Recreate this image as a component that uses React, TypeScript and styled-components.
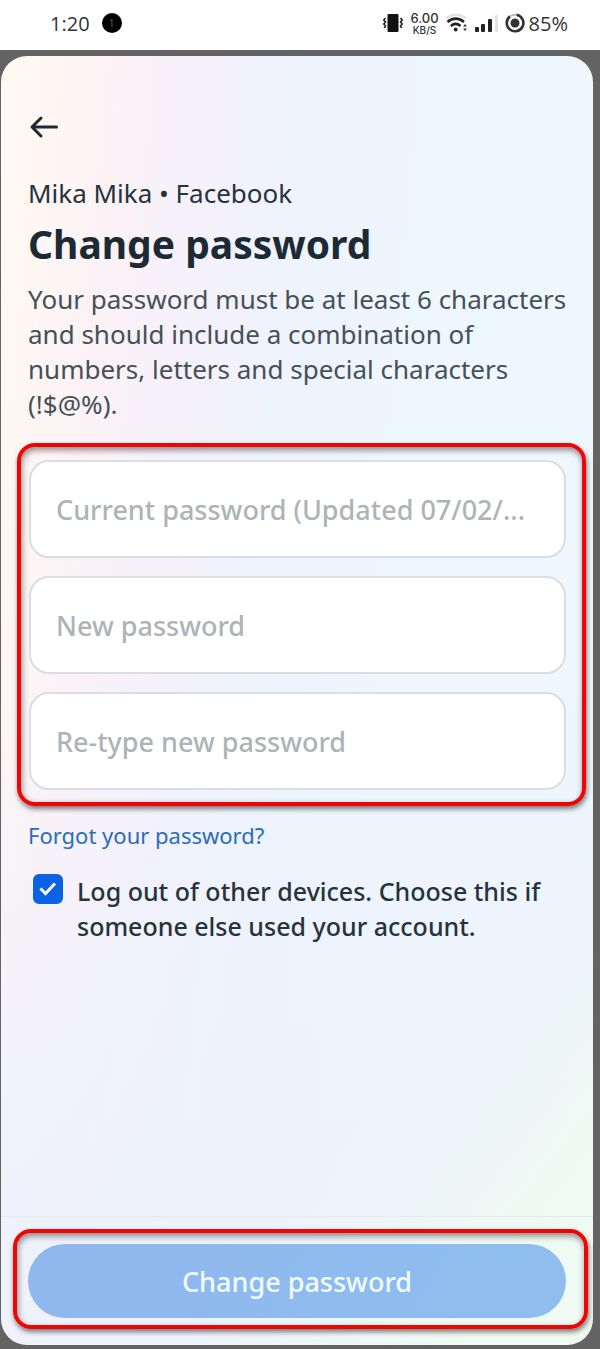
import React, { useState } from "react";
import styled, { createGlobalStyle } from "styled-components";

const GlobalStyle = createGlobalStyle`
  *, *::before, *::after { box-sizing: border-box; }
  body {
    margin: 0;
    background: #636363;
    font-family: "Noto Sans", "Open Sans", sans-serif;
    color: #26333b;
  }
`;

const Page = styled.div`
  min-height: 100vh;
  display: flex;
  flex-direction: column;
`;

const StatusBar = styled.header`
  height: 50px;
  padding: 0 32px 4px 50px;
  display: flex;
  align-items: center;
  justify-content: space-between;
  background: #fff;
  color: #333;
  font-family: "Open Sans", sans-serif;
  font-size: 20px;
`;

const StatusGroup = styled.div<{ $gap: number }>`
  display: flex;
  align-items: center;
  gap: ${(p) => p.$gap}px;
`;

const Dot = styled.span`
  width: 20px;
  height: 20px;
  border-radius: 50%;
  background: #000;
  color: #666;
  font-size: 10px;
  line-height: 20px;
  text-align: center;
`;

const Speed = styled.span`
  display: flex;
  flex-direction: column;
  align-items: center;
  font-family: Inter, sans-serif;
  font-weight: 500;
`;

const SpeedValue = styled.span`
  font-size: 13px;
  line-height: 13px;
`;

const SpeedUnit = styled.span`
  font-size: 10px;
  line-height: 10px;
`;

const Sheet = styled.main`
  flex: 1;
  display: flex;
  flex-direction: column;
  margin: 6px 7px 4px 1px;
  border-radius: 26px;
  background:
    linear-gradient(128deg, rgba(239, 250, 242, 0) 74%, #effaf2 92%),
    linear-gradient(180deg, rgba(236, 242, 252, 0) 45%, rgba(236, 242, 252, 0.8) 90%),
    linear-gradient(95deg, #fff9f2 2%, #fcf2f6 16%, #f5f1fb 30%, #eef3fc 44%, #eef6fe 62%);
`;

const Intro = styled.section`
  padding: 56px 20px 0 27px;
`;

const BackButton = styled.button`
  display: block;
  width: 32px;
  height: 32px;
  margin: 0;
  padding: 0;
  border: 0;
  background: none;
  color: #1c2b33;
`;

const Account = styled.p`
  margin: 32px 0 0;
  font-size: 26px;
  line-height: 34px;
`;

const Title = styled.h1`
  margin: 8px 0 0;
  font-size: 39px;
  line-height: 52px;
  font-weight: 700;
  color: #1c2b33;
`;

const Description = styled.p`
  margin: 12px 0 0;
  font-size: 26px;
  line-height: 35px;
  color: #465057;
`;

const Highlight = styled.div`
  border: 4px solid #f00505;
  border-radius: 18px;
  box-shadow: 1px 3px 5px rgba(0, 0, 0, 0.5), inset 1px 3px 6px rgba(0, 0, 0, 0.45);
`;

const FieldsHighlight = styled(Highlight)`
  display: flex;
  flex-direction: column;
  gap: 18px;
  margin: 21px 7px 0 16px;
  padding: 13px 16px 12px 8px;
`;

const Field = styled.input`
  width: 100%;
  height: 98px;
  padding: 0 25px;
  border: 2px solid #d9dee3;
  border-radius: 20px;
  background: #fff;
  font: inherit;
  font-size: 27px;
  font-weight: 500;
  color: #1c2b33;
  text-overflow: ellipsis;
  &::placeholder { color: #adb4b7; opacity: 1; }
`;

const Options = styled.section`
  padding: 12px 27px 0;
`;

const ForgotLink = styled.a`
  display: inline-block;
  font-size: 22px;
  line-height: 34px;
  color: #2a6db8;
  text-decoration: none;
`;

const LogoutRow = styled.label`
  display: flex;
  align-items: flex-start;
  gap: 14px;
  margin-top: 22px;
  padding-left: 5px;
  font-size: 25px;
  line-height: 35px;
  font-weight: 500;
`;

const TickBox = styled.span`
  position: relative;
  flex: none;
  width: 30px;
  height: 30px;
  svg {
    position: absolute;
    inset: 0;
    pointer-events: none;
  }
`;

const TickInput = styled.input`
  appearance: none;
  display: block;
  width: 30px;
  height: 30px;
  margin: 0;
  border: 2px solid #0b62e4;
  border-radius: 6px;
  background: #fff;
  &:checked { background: #0b62e4; }
`;

const Footer = styled.footer`
  margin-top: auto;
  padding: 12px 5px 16px 12px;
  border-top: 1px solid #e6e9f3;
`;

const SubmitHighlight = styled(Highlight)`
  padding: 11px 18px 7px 11px;
`;

const SubmitButton = styled.button`
  display: block;
  width: 100%;
  height: 74px;
  border: 0;
  border-radius: 37px;
  background: linear-gradient(120deg, #8fb7ee, #8fbeee);
  color: #f0fbff;
  font: inherit;
  font-size: 27px;
  font-weight: 500;
`;

const VibrateIcon = () => (
  <svg width="22" height="20" viewBox="0 0 22 20" aria-hidden="true">
    <rect x="5.500" y="1" width="11" height="18" rx="1" fill="#111" />
    <path d="M3.5 5 1.8 7l1.7 2-1.7 2 1.7 2-1.2 2M18.5 5l1.700 2-1.700 2 1.700 2-1.700 2 1.200 2" fill="none" stroke="#222" strokeWidth="1.6" />
  </svg>
);

const WifiIcon = () => (
  <svg width="24" height="20" viewBox="0 0 24 20" aria-hidden="true">
    <g fill="none" strokeWidth="2.6">
      <path d="M1 5.5C7 .5 15 .5 21 5.5" stroke="#dedede" strokeWidth="2" />
      <path d="M2.5 9C7.500 4.500 14 4.500 19 9" stroke="#222" />
      <path d="M5.800 13C9 10.300 12.500 10.300 15.500 13" stroke="#222" />
    </g>
    <circle cx="10.700" cy="16.500" r="1.900" fill="#222" />
    <path d="m18 13.500 2-2.500 2 2.500zM18 15.500h4l-2 2.500z" fill="#333" />
  </svg>
);

const SignalIcon = () => (
  <svg width="24" height="20" viewBox="0 0 24 20" aria-hidden="true">
    <g fill="#222">
      <rect x="0" y="14" width="4" height="5" rx="1" />
      <rect x="6" y="11" width="4" height="8" rx="1" />
      <rect x="13" y="6" width="4" height="13" rx="1" />
    </g>
    <rect x="20" y="2" width="3" height="17" rx="1" fill="#e2e2e2" />
  </svg>
);

const BatteryIcon = () => (
  <svg width="20" height="20" viewBox="0 0 20 20" aria-hidden="true">
    <circle cx="10" cy="10" r="4.500" fill="#333" />
    <path d="M11.500 1.800A8.300 8.300 0 1 1 5 3.400" fill="none" stroke="#333" strokeWidth="2.600" />
    <path d="M5.500 3.100A8.300 8.300 0 0 1 11 1.700" fill="none" stroke="#bbb" strokeWidth="2" />
  </svg>
);

const fields = [
  { id: "current", placeholder: "Current password (Updated 07/02/..." },
  { id: "new", placeholder: "New password" },
  { id: "retype", placeholder: "Re-type new password" },
];

export default function App() {
  const [logout, setLogout] = useState(true);

  return (
    <Page>
      <GlobalStyle />
      <StatusBar>
        <StatusGroup $gap={12}>
          <span>1:20</span>
          <Dot>1</Dot>
        </StatusGroup>
        <StatusGroup $gap={6}>
          <VibrateIcon />
          <Speed>
            <SpeedValue>6.00</SpeedValue>
            <SpeedUnit>KB/S</SpeedUnit>
          </Speed>
          <WifiIcon />
          <SignalIcon />
          <StatusGroup $gap={4}>
            <BatteryIcon />
            <span>85%</span>
          </StatusGroup>
        </StatusGroup>
      </StatusBar>
      <Sheet>
        <Intro>
          <BackButton type="button" aria-label="Back">
            <svg width="32" height="32" viewBox="0 0 32 32" fill="none" stroke="currentColor" strokeWidth="3" strokeLinecap="round" strokeLinejoin="round">
              <path d="M28.500 15H4.500M13 6 4 15l9 9" />
            </svg>
          </BackButton>
          <Account>Mika Mika • Facebook</Account>
          <Title>Change password</Title>
          <Description>
            Your password must be at least 6 characters and should include a
            combination of numbers, letters and special characters (!$@%).
          </Description>
        </Intro>
        <FieldsHighlight>
          {fields.map((f) => (
            <Field key={f.id} id={f.id} type="password" placeholder={f.placeholder} aria-label={f.placeholder} />
          ))}
        </FieldsHighlight>
        <Options>
          <ForgotLink href="#forgot">Forgot your password?</ForgotLink>
          <LogoutRow>
            <TickBox>
              <TickInput type="checkbox" checked={logout} onChange={(e) => setLogout(e.target.checked)} />
              <svg width="30" height="30" viewBox="0 0 30 30" fill="none" stroke="#fff" strokeWidth="3">
                <path d="m7.500 14.500 5 5L22 9.500" />
              </svg>
            </TickBox>
            <span>
              Log out of other devices. Choose this if someone else used your
              account.
            </span>
          </LogoutRow>
        </Options>
        <Footer>
          <SubmitHighlight>
            <SubmitButton type="submit">Change password</SubmitButton>
          </SubmitHighlight>
        </Footer>
      </Sheet>
    </Page>
  );
}
